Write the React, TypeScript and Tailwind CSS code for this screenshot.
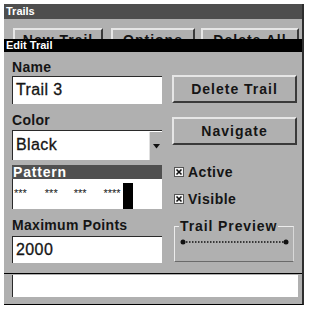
import React from "react";

const Btn = ({ label, className }: { label: string; className: string }) => (
  <div
    className={`h-[28px] bg-[#b0b0b0] border-t-[2px] border-l-[2px] border-t-[#e6e6e6] border-l-[#e6e6e6] border-b-[2px] border-r-[2px] border-b-[#3a3a3a] border-r-[#3a3a3a] flex items-center justify-center text-[14px] font-bold tracking-[1px] text-[#151515] ${className}`}
  >
    {label}
  </div>
);

const Check = () => (
  <svg width="10" height="10" viewBox="0 0 10 10" className="shrink-0">
    <rect x="0.5" y="0.5" width="9" height="9" fill="#f4f4f4" stroke="#555" />
    <path d="M2.5 2.5 L7.5 7.5 M7.5 2.5 L2.5 7.5" stroke="#111" strokeWidth="1.6" />
  </svg>
);

const Label = ({ text, className }: { text: string; className: string }) => (
  <div className={`h-[16px] leading-[16px] text-[14px] font-bold tracking-[0.3px] ${className}`}>{text}</div>
);

export default function App() {
  return (
    <div className="w-[309px] h-[309px] bg-white pl-[4px] pt-[4px] font-['Liberation_Sans',Arial,sans-serif] text-[#151515]">
      <div className="w-[300px] h-[301px] bg-[#b0b0b0] border-r-[2px] border-r-[#2e2e2e] border-b-[1px] border-b-black flex flex-col">
        <div className="h-[15px] shrink-0 bg-[#4e4e4e] text-white text-[11px] font-bold pl-[2px] leading-[15px]">
          Trails
        </div>
        <div className="h-[20px] shrink-0 overflow-hidden flex items-start pt-[9px] pl-[9px]">
          <Btn label="New Trail" className="w-[90px] !h-[25px]" />
          <Btn label="Options" className="w-[84px] ml-[8px] !h-[25px]" />
          <Btn label="Delete All" className="w-[98px] ml-[6px] !h-[25px]" />
        </div>
        <div className="h-[235px] shrink-0 flex flex-col border-b-[1px] border-b-black">
          <div className="h-[13px] shrink-0 bg-black text-white text-[11px] font-bold pl-[2px] leading-[13px]">
            Edit Trail
          </div>
          <div className="flex-1 flex pl-[8px]">
            <div className="w-[150px] flex flex-col">
              <Label text="Name" className="mt-[7px]" />
              <div className="mt-[1px] h-[28px] bg-white border-t-[1px] border-l-[1px] border-[#2a2a2a] pl-[3px] text-[16px] leading-[26px] tracking-[0.4px] [-webkit-text-stroke:0.3px_#151515]">
                Trail 3
              </div>
              <Label text="Color" className="mt-[8px]" />
              <div className="mt-[2px] h-[30px] bg-white border-t-[1px] border-l-[1px] border-[#2a2a2a] flex">
                <div className="flex-1 pl-[3px] text-[16px] leading-[28px] tracking-[0.4px] [-webkit-text-stroke:0.3px_#151515]">Black</div>
                <div className="w-[13px] mt-[1px] bg-[#b0b0b0] border-l-[1px] border-l-[#e0e0e0] flex items-center justify-center">
                  <svg width="7" height="5" viewBox="0 0 7 5">
                    <path d="M0 0 L7 0 L3.5 4.5 Z" fill="#111" />
                  </svg>
                </div>
              </div>
              <div className="mt-[5px] h-[14px] bg-[#505050] text-white text-[14px] font-bold leading-[14px] tracking-[0.8px] pl-[1px]">
                Pattern
              </div>
              <div className="h-[30px] bg-white border-l-[1px] border-l-[#2a2a2a] flex items-stretch">
                <div className="w-[110px] pl-[1px] pt-[9px] text-[11px] leading-[10px] flex">
                  <span>***</span>
                  <span className="ml-[18px]">***</span>
                  <span className="ml-[16px]">***</span>
                  <span className="ml-[17px]">****</span>
                </div>
                <div className="w-[10px] mt-[4px] bg-black" />
              </div>
              <Label text="Maximum Points" className="mt-[8px]" />
              <div className="mt-[3px] h-[27px] bg-white border-t-[1px] border-l-[1px] border-[#2a2a2a] pl-[3px] text-[16px] leading-[25px] tracking-[0.4px] [-webkit-text-stroke:0.3px_#151515]">
                2000
              </div>
            </div>
            <div className="w-[125px] ml-[10px] flex flex-col">
              <Btn label="Delete Trail" className="mt-[23px]" />
              <Btn label="Navigate" className="mt-[14px]" />
              <div className="mt-[19px] h-[16px] flex items-center gap-[4px] pl-[2px] text-[14px] tracking-[0.5px] font-bold">
                <Check />
                <span className="leading-[16px]">Active</span>
              </div>
              <div className="mt-[11px] h-[16px] flex items-center gap-[4px] pl-[2px] text-[14px] tracking-[0.5px] font-bold">
                <Check />
                <span className="leading-[16px]">Visible</span>
              </div>
              <fieldset className="mt-[11px] ml-[2px] w-[120px] h-[44px] border-t-[1px] border-l-[1px] border-t-[#ececec] border-l-[#ececec] border-r-[1px] border-b-[1px] border-r-[#d8d8d8] border-b-[#6a6a6a] pl-[3px]">
                <legend className="text-[14px] leading-[16px] font-bold tracking-[0.9px] ml-[1px] px-[1px]">Trail Preview</legend>
                <svg width="112" height="20" viewBox="0 0 112 20" className="block">
                  <line x1="5" y1="8" x2="108" y2="8" stroke="#111" strokeWidth="1.5" strokeDasharray="1.5 1.5" />
                  <circle cx="5" cy="8" r="2.5" fill="#111" />
                  <circle cx="108" cy="8" r="2.5" fill="#111" />
                </svg>
              </fieldset>
            </div>
          </div>
        </div>
        <div className="pl-[8px] pt-[1px]">
          <div className="w-[286px] h-[22px] bg-white border-l-[1px] border-l-[#2a2a2a]" />
        </div>
      </div>
    </div>
  );
}
